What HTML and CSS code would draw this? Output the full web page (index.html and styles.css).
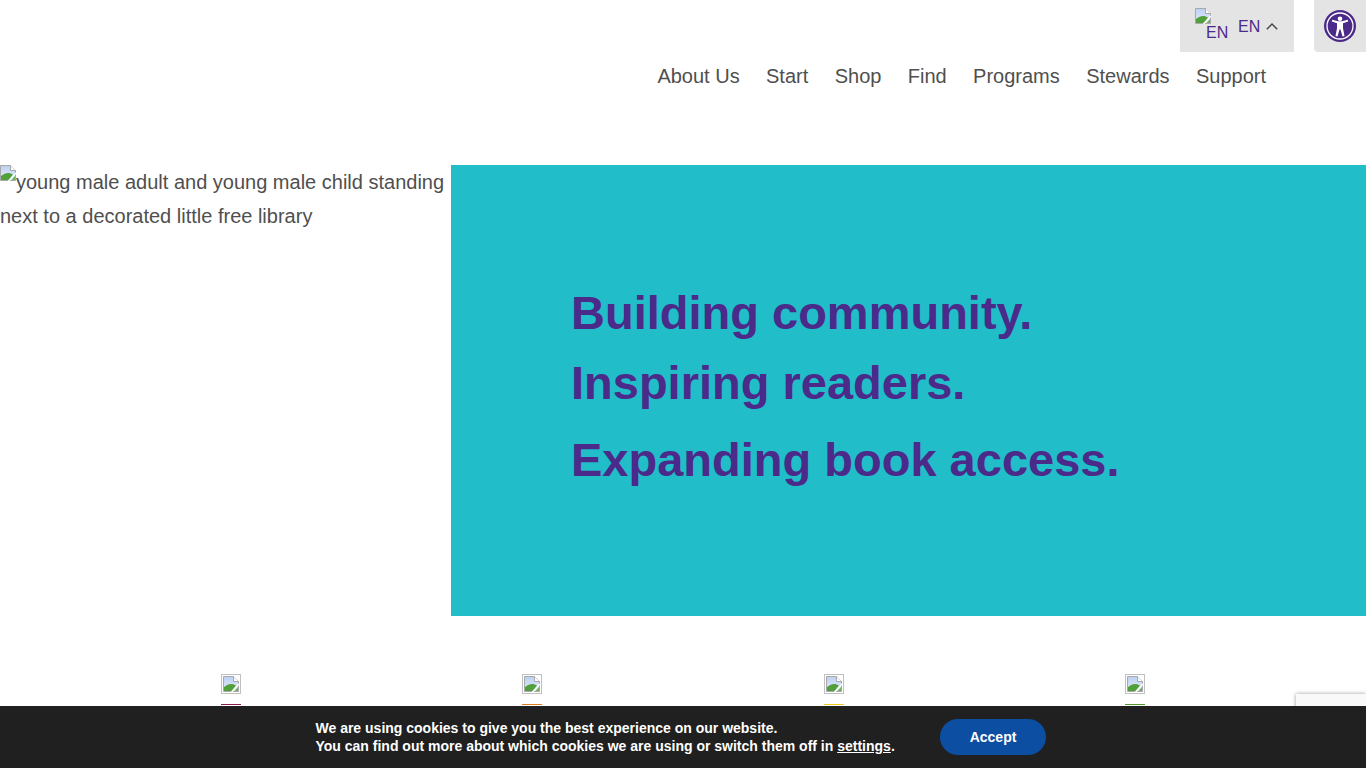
FILE: index.html
```html
<!DOCTYPE html>
<html lang="en">
<head>
<meta charset="utf-8">
<title>Little Free Library</title>
<link rel="stylesheet" href="styles.css">
</head>
<body>
<svg class="defs" width="0" height="0" aria-hidden="true">
  <defs>
    <linearGradient id="sky" x1="0" y1="0" x2="0" y2="1">
      <stop offset="0" stop-color="#bccff3"/>
      <stop offset="1" stop-color="#e6edfb"/>
    </linearGradient>
  </defs>
  <symbol id="broken" viewBox="0 0 16 16">
    <path d="M.5.5h10l5 5v10H.5z" fill="url(#sky)" stroke="#a8a8a8"/>
    <path d="M10.500.5v5h5" fill="#fff" stroke="#a8a8a8"/>
    <path d="M1 15V11C3 9 6 7.500 9.500 8L13 9.500 9 15z" fill="#52a03c"/>
    <path d="M8.500 16 16 8" stroke="#fff" stroke-width="1.500"/>
    <path d="M11.500 15 15 11V15z" fill="#6fb35a"/>
  </symbol>
</svg>
<header class="site-header">
  <div class="top-bar">
    <div class="lang">
      <span class="lang-flag">
        <svg class="broken-icon"><use href="#broken"/></svg>
        <span class="lang-alt">EN</span>
      </span>
      <span class="lang-code">EN</span>
      <svg class="chevron" viewBox="0 0 12 7"><path d="M.8 6.300 6 1l5.200 5.300" fill="none" stroke="#444" stroke-width="1.400"/></svg>
    </div>
  </div>
  <nav class="nav">
    <a href="#">About Us</a>
    <a href="#">Start</a>
    <a href="#">Shop</a>
    <a href="#">Find</a>
    <a href="#">Programs</a>
    <a href="#">Stewards</a>
    <a href="#">Support</a>
  </nav>
</header>
<main>
  <section class="hero">
    <div class="hero-image">
      <svg class="broken-icon hero-broken"><use href="#broken"/></svg>young male adult and young male child standing next to a decorated little free library
    </div>
    <div class="hero-panel">
      <h1>Building community.</h1>
      <h1>Inspiring readers.</h1>
      <h1 class="last">Expanding book access.</h1>
    </div>
  </section>
  <section class="features">
    <div class="feature"><span class="frame"><svg class="frame-icon"><use href="#broken"/></svg></span><span class="rule red"></span></div>
    <div class="feature"><span class="frame"><svg class="frame-icon"><use href="#broken"/></svg></span><span class="rule orange"></span></div>
    <div class="feature"><span class="frame"><svg class="frame-icon"><use href="#broken"/></svg></span><span class="rule yellow"></span></div>
    <div class="feature"><span class="frame"><svg class="frame-icon"><use href="#broken"/></svg></span><span class="rule green"></span></div>
  </section>
</main>
<button class="a11y" aria-label="Accessibility tools">
  <svg viewBox="0 0 32 32" width="32" height="32">
    <circle cx="16" cy="16" r="16" fill="#4b2a8a"/>
    <circle cx="16" cy="16" r="13" fill="none" stroke="#fff" stroke-width="1.300"/>
    <circle cx="16" cy="8.800" r="2.300" fill="#fff"/>
    <path d="M7.800 11.600 13 13.200v5l-1.500 7.800 2 .4 2-7h1l2 7 2-.4-1.500-7.800v-5l5.200-1.600-.5-1.800-5.700 1.400h-4l-5.700-1.400z" fill="#fff"/>
  </svg>
</button>
<div class="recaptcha"></div>
<div class="cookie">
  <p>We are using cookies to give you the best experience on our website.<br>You can find out more about which cookies we are using or switch them off in <a href="#">settings</a>.</p>
  <button class="accept">Accept</button>
</div>
</body>
</html>
```
FILE: styles.css
```css
* { box-sizing: border-box; }
html, body { margin: 0; padding: 0; }
body {
  font-family: "Liberation Sans", Arial, sans-serif;
  color: #4f4f4f;
  background: #fff;
  height: 768px;
  overflow: hidden;
}
.defs { position: absolute; }
.site-header { height: 165px; }
.top-bar {
  display: flex;
  justify-content: flex-end;
  padding-right: 72px;
}
.lang {
  width: 114px;
  height: 52px;
  background: #e4e4e4;
  display: flex;
  align-items: flex-start;
  padding: 8px 0 0 15px;
  color: #4b2a8a;
  font-size: 16px;
}
.lang-flag {
  display: block;
  width: 33px;
  line-height: 16px;
}
.lang-flag .broken-icon { display: block; }
.lang-alt { display: block; margin: 1px 0 0 11px; }
.lang-code { margin: 11px 0 0 10px; line-height: 16px; }
.chevron { width: 12px; height: 7px; margin: 15px 0 0 6px; }
.broken-icon { width: 16px; height: 16px; }
.nav {
  display: flex;
  justify-content: flex-end;
  gap: 26.4px;
  padding: 13px 100px 0 0;
  font-size: 20px;
  line-height: 23px;
}
.nav a { color: #4f4f4f; text-decoration: none; }
.hero { display: flex; height: 451px; }
.hero-image {
  width: 451px;
  font-size: 20px;
  line-height: 34px;
}
.hero-broken { vertical-align: 8px; }
.hero-panel {
  flex: 1;
  background: #21bdc9;
  padding: 124px 0 0 120px;
}
h1 {
  margin: 0 0 22px;
  font-size: 47px;
  line-height: 48px;
  font-weight: 700;
  color: #4b2a8a;
}
h1.last { margin-top: 29px; }
.features {
  display: flex;
  padding: 58px 0 0 221px;
  gap: 281.33px;
}
.feature { width: 20px; display: flex; flex-direction: column; }
.frame {
  display: block;
  width: 20px;
  height: 20px;
  border: 1px solid #c0c0c0;
  padding: 1px;
}
.frame-icon { display: block; width: 16px; height: 16px; }
.rule { display: block; height: 1px; margin-top: 10px; }
.red { background: #8b1a4f; }
.orange { background: #e07b1a; }
.yellow { background: #f2c81e; }
.green { background: #4d9a2a; }
.a11y {
  position: fixed;
  top: 0;
  right: 0;
  width: 52px;
  height: 52px;
  padding: 10px;
  border: 0;
  background: #e4e4e4;
  border-radius: 0 0 0 4px;
}
.a11y svg { display: block; }
.recaptcha {
  position: fixed;
  right: 0;
  top: 694px;
  width: 70px;
  height: 60px;
  background: #f9f9f9;
  box-shadow: 0 0 4px rgba(0, 0, 0, .4);
}
.cookie {
  position: fixed;
  left: 0;
  right: 0;
  bottom: 0;
  height: 62px;
  background: #202020;
  color: #fff;
  display: flex;
  align-items: center;
  padding: 0 0 0 315.5px;
  font-size: 14px;
  font-weight: 700;
  line-height: 18px;
}
.cookie p { margin: 0; width: 624.5px; }
.cookie a { color: #fff; }
.accept {
  width: 106px;
  height: 36px;
  border: 0;
  border-radius: 18px;
  background: #0b4ea2;
  color: #fff;
  font: 700 14px "Liberation Sans", Arial, sans-serif;
}
```
